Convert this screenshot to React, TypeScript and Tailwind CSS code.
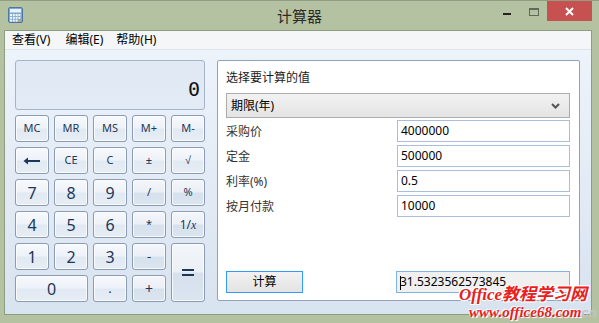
import React from 'react';

const UI = '"Segoe UI","Noto Sans","Noto Sans CJK SC",sans-serif';

function Key({ label, op, className = '', children }: { label?: string; op?: boolean; className?: string; children?: React.ReactNode }) {
  const bg = op
    ? 'bg-[linear-gradient(#f3f6fa_0%,#ebf0f6_48%,#d6e1ed_52%,#dbe5f0_100%)]'
    : 'bg-[linear-gradient(#f6f9fc_0%,#eef3f9_48%,#e1e9f2_52%,#e6edf5_100%)]';
  return (
    <div className={`flex items-center justify-center rounded-[3px] border border-[#8b9bb1] shadow-[inset_0_0_0_1px_rgba(255,255,255,0.75)] text-[#1e3658] ${bg} ${className}`}>
      {children ?? label}
    </div>
  );
}

function TitleIcon() {
  return (
    <svg width="15" height="16" viewBox="0 0 15 16">
      <rect x="0.5" y="0.5" width="14" height="15" rx="1.5" fill="#7fa6cf" stroke="#4f77a3" />
      <rect x="2" y="2" width="11" height="3.5" fill="#e8f2fb" />
      {[0, 1, 2, 3].map(c =>
        [0, 1, 2].map(r => (
          <rect key={`${c}-${r}`} x={2 + c * 2.8} y={7 + r * 2.8} width="2" height="2" fill={c === 3 && r === 2 ? '#f0a040' : '#f4f8fc'} />
        )),
      )}
    </svg>
  );
}

export default function App() {
  return (
    <div className="relative w-[599px] h-[323px] overflow-hidden bg-[#b5c2a1] flex flex-col border-t border-[#8f9d80]" style={{ fontFamily: UI }}>
      {/* title bar */}
      <div className="relative h-[29px] shrink-0 flex items-center">
        <div className="absolute left-[8px] top-[6px]"><TitleIcon /></div>
        <div className="w-full text-center text-[15px] text-[#2b2b2b] leading-none pt-[1px]">计算器</div>
        <div className="absolute left-[503px] top-[12px] w-[8px] h-[2px] bg-[#222]" />
        <div className="absolute left-[529px] top-[7px] w-[10px] h-[8px] border border-[#5d6b58] border-t-2" />
        <div className="absolute left-[547px] top-0 w-[45px] h-[20px] bg-[#c75050] flex items-center justify-center">
          <svg width="9" height="9" viewBox="0 0 9 9">
            <path d="M1 1 L8 8 M8 1 L1 8" stroke="#fff" strokeWidth="2" />
          </svg>
        </div>
      </div>

      {/* client area */}
      <div className="flex-1 ml-[4px] mr-[7px] mb-[8px] border border-[#8e9c81] flex flex-col">
        <div className="h-[19px] shrink-0 bg-[#f5f6f7] border-b border-[#dfe3e8] flex items-center text-[12px] text-black leading-none">
          <span className="ml-[7px]">查看(V)</span>
          <span className="ml-[15px]">编辑(E)</span>
          <span className="ml-[13px]">帮助(H)</span>
        </div>

        <div className="flex-1 flex bg-[linear-gradient(#edf3fb,#d8e3f0)] pl-[10px] pt-[10px]">
          {/* calculator */}
          <div className="w-[190px] flex flex-col">
            <div className="h-[50px] rounded-[3px] border border-[#a6b4c7] bg-[linear-gradient(#dfe8f3,#e3ecf6)] flex items-center justify-end pr-[4px] pt-[8px]">
              <span className="text-[20px] text-[#111] leading-none" style={{ fontFamily: '"DejaVu Sans Mono",monospace' }}>0</span>
            </div>
            <div className="mt-[5px] grid grid-cols-[34px_34px_34px_34px_34px] grid-rows-[27px_27px_27px_27px_27px_27px] gap-x-[5px] gap-y-[5px] text-[11px]">
              <Key label="MC" />
              <Key label="MR" />
              <Key label="MS" />
              <Key label="M+" />
              <Key label="M-" />
              <Key>
                <svg width="18" height="8" viewBox="0 0 18 8">
                  <path d="M4 4 H17" stroke="#1e3658" strokeWidth="2" />
                  <path d="M0.5 4 L5 0.5 L5 7.5 Z" fill="#1e3658" />
                </svg>
              </Key>
              <Key label="CE" />
              <Key label="C" />
              <Key label="±" />
              <Key>
                <span className="text-[11px]" style={{ fontFamily: '"Liberation Sans",sans-serif' }}>√</span>
              </Key>
              <Key label="7" className="text-[16px]" />
              <Key label="8" className="text-[16px]" />
              <Key label="9" className="text-[16px]" />
              <Key label="/" op />
              <Key label="%" op />
              <Key label="4" className="text-[16px]" />
              <Key label="5" className="text-[16px]" />
              <Key label="6" className="text-[16px]" />
              <Key label="*" op />
              <Key op className="text-[12px]"><span>1/<i style={{ fontFamily: '"Liberation Serif",serif' }}>x</i></span></Key>
              <Key label="1" className="text-[16px]" />
              <Key label="2" className="text-[16px]" />
              <Key label="3" className="text-[16px]" />
              <Key label="-" op className="text-[13px]" />
              <Key op className="row-span-2">
                <svg width="12" height="7" viewBox="0 0 12 7">
                  <rect x="0" y="0" width="12" height="2" fill="#1e3658" />
                  <rect x="0" y="5" width="12" height="2" fill="#1e3658" />
                </svg>
              </Key>
              <Key label="0" className="col-span-2 text-[16px]" />
              <Key label="." className="text-[13px]" />
              <Key label="+" op className="text-[14px]" />
            </div>
          </div>

          {/* mortgage panel */}
          <div className="ml-[12px] mb-[13px] w-[363px] bg-white border border-[#8fa3bc] rounded-[2px] flex flex-col pl-[8px] pr-[9px] pt-[9px] pb-[7px] text-[12px] text-[#1a1a1a]">
            <div className="leading-[16px]">选择要计算的值</div>
            <div className="mt-[7px] h-[25px] border border-[#acacac] bg-[linear-gradient(#f2f2f2,#e4e4e4)] flex items-center justify-between pl-[4px] pr-[9px]">
              <span className="text-black">期限(年)</span>
              <svg width="9" height="6" viewBox="0 0 9 6">
                <path d="M1 1 L4.5 4.5 L8 1" stroke="#555" strokeWidth="2" fill="none" />
              </svg>
            </div>
            <div className="mt-[2px] flex flex-col gap-[3px]">
              {[
                ['采购价', '4000000'],
                ['定金', '500000'],
                ['利率(%)', '0.5'],
                ['按月付款', '10000'],
              ].map(([k, v]) => (
                <div key={k} className="h-[22px] flex">
                  <div className="w-[171px] pt-[4px] leading-[16px] text-[#333]">{k}</div>
                  <div className="flex-1 border border-[#a9bedb] flex items-center pl-[3px] text-black">{v}</div>
                </div>
              ))}
            </div>
            <div className="mt-auto h-[22px] flex">
              <div className="w-[77px] border border-[#3399ff] bg-[linear-gradient(#f2f2f2,#e3e3e3)] flex items-center justify-center text-black">计算</div>
              <div className="ml-[93px] flex-1 border border-[#7eb4ea] bg-[#f0f0f0] flex items-center pl-[3px] text-black relative">
                <span className="absolute left-[3px] top-[4px] w-[1px] h-[14px] bg-black" />
                31.5323562573845
              </div>
            </div>
          </div>
        </div>
      </div>

      {/* watermark */}
      <div className="absolute left-[459px] top-[285px] text-[17px] font-bold italic text-[#e8201c] leading-none [text-shadow:1px_1px_0_#fff,-1px_-1px_0_#fff,1px_-1px_0_#fff,-1px_1px_0_#fff]" style={{ fontFamily: '"Liberation Serif","Noto Sans CJK SC",serif' }}>
        Office教程学习网
      </div>
      <div className="absolute left-[469px] top-[304px] flex items-baseline leading-none">
        <span className="text-[15px] font-bold italic text-[#e8201c] [text-shadow:1px_1px_0_#fff,-1px_-1px_0_#fff,2px_1px_0_#c9c9c9]" style={{ fontFamily: '"Liberation Serif",serif' }}>www.office68.com</span>
        <span className="text-[13px] font-bold italic text-[#c4c4c4]" style={{ fontFamily: '"Liberation Sans",sans-serif' }}>cn</span>
      </div>
    </div>
  );
}
